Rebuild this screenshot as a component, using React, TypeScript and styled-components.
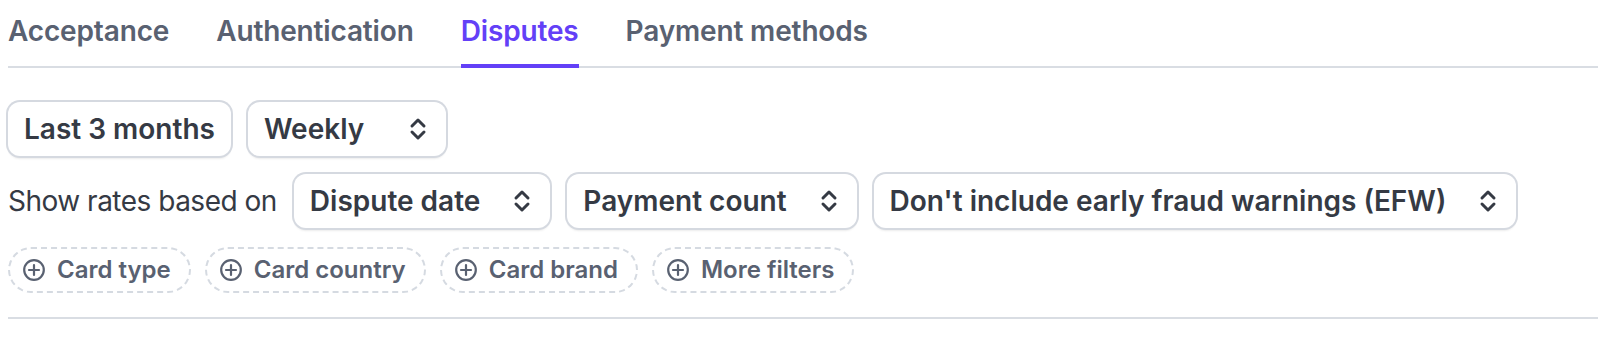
import styled, { createGlobalStyle } from 'styled-components';

const GlobalStyle = createGlobalStyle`
  body {
    margin: 0;
    background: #ffffff;
    font-family: Inter, "Noto Sans", "Liberation Sans", sans-serif;
  }
`;

const Page = styled.div`
  padding-left: 8px;
`;

const TabBar = styled.div`
  display: flex;
  gap: 47px;
  border-bottom: 2px solid #d9dde3;
`;

const Tab = styled.div<{ $active?: boolean }>`
  padding: 13px 0 15px;
  margin-bottom: -2px;
  font-size: 28px;
  line-height: 36px;
  font-weight: 600;
  letter-spacing: -0.15px;
  color: ${(p) => (p.$active ? '#6340f7' : '#596171')};
  border-bottom: 4px solid ${(p) => (p.$active ? '#6340f7' : 'transparent')};
`;

const Filters = styled.div`
  display: flex;
  flex-direction: column;
  gap: 18px;
  padding: 34px 0 24px;
  border-bottom: 2px solid #d9dde3;
`;

const Row = styled.div`
  display: flex;
  align-items: center;
  gap: 17px;
`;

const PillRow = styled(Row)`
  gap: 14px;
  margin-top: 1px;
`;

const Label = styled.span`
  font-size: 28px;
  line-height: 36px;
  letter-spacing: -0.5px;
  color: #353a44;
`;

const SelectButton = styled.div<{ $width?: number }>`
  display: flex;
  align-items: center;
  justify-content: space-between;
  gap: 33px;
  height: 54px;
  padding: 0 16px;
  ${(p) => (p.$width ? `width: ${p.$width}px;` : '')}
  box-sizing: border-box;
  border-radius: 12px;
  background: #ffffff;
  box-shadow: 0 0 0 2px #d5d9e0, 0 3px 2px rgba(0, 0, 0, 0.08);
  font-size: 28px;
  line-height: 36px;
  font-weight: 600;
  color: #353a44;
  white-space: nowrap;
`;

const ChevronIcon = styled.svg`
  flex: none;
  margin-right: 3px;
`;

const Pill = styled.div`
  display: flex;
  align-items: center;
  gap: 12px;
  height: 46px;
  box-sizing: border-box;
  padding: 0 18px 0 13px;
  border: 2px dashed #d5dae1;
  border-radius: 23px;
  font-size: 24px;
  line-height: 30px;
  font-weight: 600;
  color: #596171;
  white-space: nowrap;
`;

const Chevrons = () => (
  <ChevronIcon width="18" height="26" viewBox="0 0 18 26" fill="none">
    <path d="M3 10 L9 4 L15 10" stroke="#353a44" strokeWidth="3" strokeLinecap="round" strokeLinejoin="round" />
    <path d="M3 16 L9 22 L15 16" stroke="#353a44" strokeWidth="3" strokeLinecap="round" strokeLinejoin="round" />
  </ChevronIcon>
);

const PlusCircle = () => (
  <svg width="22" height="22" viewBox="0 0 22 22" fill="none">
    <circle cx="11" cy="11" r="9.8" stroke="#596171" strokeWidth="2.2" />
    <path d="M11 6 V16 M6 11 H16" stroke="#596171" strokeWidth="2.2" strokeLinecap="round" />
  </svg>
);

const tabs = ['Acceptance', 'Authentication', 'Disputes', 'Payment methods'];
const pills = ['Card type', 'Card country', 'Card brand', 'More filters'];

const App = () => {
  return (
    <Page>
      <GlobalStyle />
      <TabBar>
        {tabs.map((t) => (
          <Tab key={t} $active={t === 'Disputes'}>
            {t}
          </Tab>
        ))}
      </TabBar>
      <Filters>
        <Row>
          <SelectButton>Last 3 months</SelectButton>
          <SelectButton $width={198}>
            Weekly
            <Chevrons />
          </SelectButton>
        </Row>
        <Row>
          <Label>Show rates based on</Label>
          <SelectButton>
            Dispute date
            <Chevrons />
          </SelectButton>
          <SelectButton>
            Payment count
            <Chevrons />
          </SelectButton>
          <SelectButton>
            Don't include early fraud warnings (EFW)
            <Chevrons />
          </SelectButton>
        </Row>
        <PillRow>
          {pills.map((p) => (
            <Pill key={p}>
              <PlusCircle />
              {p}
            </Pill>
          ))}
        </PillRow>
      </Filters>
    </Page>
  );
};

export default App;
